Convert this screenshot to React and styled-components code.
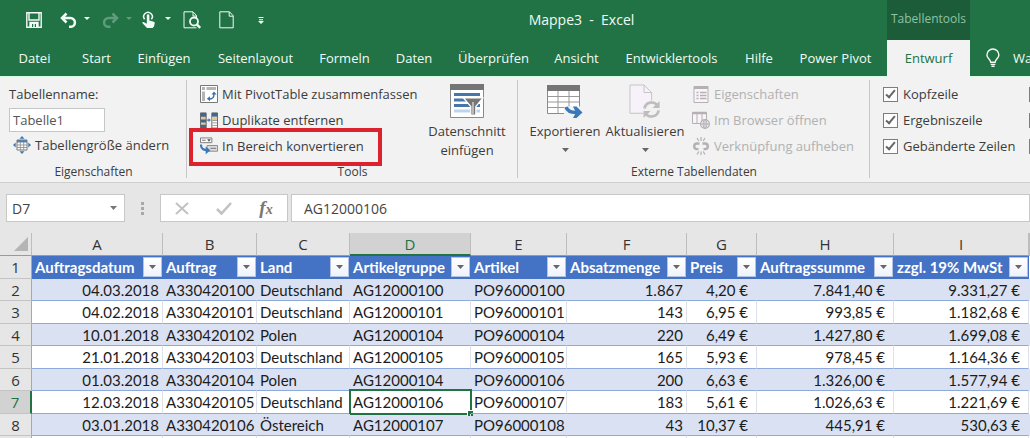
import React from "react";
import styled, { createGlobalStyle, css } from "styled-components";

const UI_FONT = `"Open Sans", "Noto Sans", sans-serif`;
const CELL_FONT = `Lato, "Open Sans", sans-serif`;

const GlobalStyle = createGlobalStyle`
  *, *::before, *::after { box-sizing: border-box; }
  body { margin: 0; background: #fff; font-family: ${UI_FONT}; color: #3c3c3c; }
  button, input { font: inherit; color: inherit; margin: 0; }
  button { border: 0; padding: 0; background: none; }
  svg { display: block; flex: none; }
`;

const Page = styled.div`
  display: flex;
  flex-direction: column;
  height: 100vh;
  overflow: hidden;
`;

/* ---------- Title bar and tabs ---------- */

const TitleBar = styled.header`
  display: flex;
  height: 40px;
  flex: none;
  background: #217346;
  color: #f2fbf5;
`;

const TitleMain = styled.div`
  display: flex;
  align-items: center;
  flex: 0 0 887px;
`;

const QuickAccess = styled.div`
  display: flex;
  align-items: center;
  width: 276px;
  padding-left: 26px;
`;

const QuickButton = styled.button`
  width: ${(p) => p.$w}px;
  height: 24px;
  opacity: ${(p) => (p.disabled ? 0.3 : 1)};
  color: #f2fbf5;
`;

const DocTitle = styled.h1`
  flex: 1;
  margin: 0;
  padding-bottom: 2px;
  text-align: center;
  font-size: 14px;
  font-weight: 400;
  white-space: pre;
`;

const ContextTitle = styled.div`
  flex: 0 0 83px;
  display: flex;
  align-items: center;
  justify-content: center;
  padding-bottom: 4px;
  background: #1c5c38;
  color: #8fc3a4;
  font-size: 12px;
`;

const TabBar = styled.nav`
  display: flex;
  flex: none;
  height: 37px;
  background: #217346;
  box-shadow: inset 0 -1px #d5f9e3;
`;

const Tab = styled.button`
  flex: 0 0 ${(p) => p.$w}px;
  margin-left: ${(p) => (p.$active ? 3 : 0)}px;
  padding-bottom: 2px;
  white-space: nowrap;
  font-size: 13px;
  color: ${(p) => (p.$active ? "#217346" : "#f2fbf5")};
  background: ${(p) => (p.$active ? "#f2f2f2" : "transparent")};
`;

const TellMe = styled.button`
  display: flex;
  align-items: center;
  gap: 13px;
  margin-left: 16px;
  padding-bottom: 2px;
  font-size: 13px;
  color: #f2fbf5;
  white-space: nowrap;
`;

/* ---------- Ribbon ---------- */

const Ribbon = styled.div`
  display: flex;
  flex: none;
  height: 106px;
  background: #f2f2f2;
  border-bottom: 1px solid #cfcfcf;
`;

const Group = styled.section`
  display: flex;
  flex-direction: column;
  flex: ${(p) => (p.$w ? `0 0 ${p.$w}px` : "1 0 auto")};
  position: relative;
  padding-top: 4px;

  &:not(:last-child)::after {
    content: "";
    position: absolute;
    right: 0;
    top: 3px;
    bottom: 4px;
    width: 1px;
    background: #c6c6c6;
  }
`;

const GroupBody = styled.div`
  display: flex;
  height: 82px;
  padding-left: ${(p) => p.$pad}px;
`;

const GroupLabel = styled.h2`
  margin: 0;
  text-align: center;
  font-size: 12px;
  line-height: 20px;
  font-weight: 400;
`;

const Stack = styled.div`
  display: flex;
  flex-direction: column;
  width: ${(p) => (p.$w ? `${p.$w}px` : "auto")};
  padding-left: ${(p) => p.$indent || 0}px;
`;

const NameLabel = styled.label`
  font-size: 13px;
  line-height: 27px;
`;

const NameInput = styled.input`
  width: 96px;
  height: 24px;
  padding: 0 3px;
  border: 1px solid #c6c6c6;
  background: #fff;
  font-size: 13px;
  color: #555;
`;

const Command = styled.button`
  position: relative;
  display: flex;
  align-items: center;
  gap: 4px;
  height: 26px;
  padding-left: ${(p) => p.$indent || 0}px;
  font-size: 13px;
  white-space: nowrap;
  color: ${(p) => (p.disabled ? "#b1b1b1" : "#3c3c3c")};

  svg { width: 18px; }

  ${(p) =>
    p.$marked &&
    css`
      &::after {
        content: "";
        position: absolute;
        top: -5px;
        bottom: -7px;
        left: -11px;
        width: 193px;
        border: 4px solid #dc222c;
      }
    `}
`;

const BigCommand = styled.button`
  display: flex;
  flex-direction: column;
  align-items: center;
  width: ${(p) => p.$w}px;
  padding-top: 3px;
  font-size: 13px;
  line-height: 19px;
  white-space: nowrap;

  & > svg:first-child { margin-bottom: 4px; }
  & > svg:last-child { margin-top: 7px; }
`;

const Check = styled.label`
  display: flex;
  align-items: center;
  gap: 5px;
  height: 26px;
  font-size: 13px;
  white-space: nowrap;
`;

const CheckBox = styled.input.attrs({ type: "checkbox" })`
  appearance: none;
  position: relative;
  width: 15px;
  height: 15px;
  border: 1px solid #7d7d7d;
  background: #fdfdfd;

  &:checked::after {
    content: "";
    position: absolute;
    left: 4px;
    top: 0;
    width: 5px;
    height: 10px;
    border: solid #666;
    border-width: 0 2px 2px 0;
    transform: rotate(40deg);
  }
`;

/* ---------- Formula bar ---------- */

const FormulaBar = styled.div`
  display: flex;
  flex: none;
  height: 50px;
  padding: 11px 0 11px 6px;
  background: #e6e6e6;
`;

const BarBox = styled.div`
  display: flex;
  align-items: center;
  flex: ${(p) => (p.$w ? `0 0 ${p.$w}px` : "1 1 0")};
  min-width: 0;
  margin-right: ${(p) => p.$after || 0}px;
  border: 1px solid #c8c8c8;
  background: #fff;
`;

const BarInput = styled.input`
  flex: 1;
  min-width: 0;
  border: 0;
  padding: 0 0 0 ${(p) => p.$pad}px;
  background: none;
  font-size: 14px;
  color: #444;
`;

const BarButton = styled.button`
  display: grid;
  place-items: center;
  width: ${(p) => p.$w}px;
  height: 26px;
`;

const Fx = styled.span`
  font: italic bold 19px "Liberation Serif", serif;
  color: #777;
  small { font-size: 14px; }
`;

const Dots = styled.div`
  display: grid;
  place-items: center;
  flex: 0 0 35px;
`;

/* ---------- Sheet ---------- */

const Sheet = styled.main`
  flex: 1;
  min-height: 0;
  overflow: hidden;
  background: #fff;
`;

const Grid = styled.table`
  table-layout: fixed;
  width: 100%;
  border-spacing: 0;
  font-family: ${CELL_FONT};
  font-size: 15px;
  line-height: 20px;
  font-variant-numeric: tabular-nums;
  color: #1c1c1c;
`;

const ColHead = styled.th`
  height: 23px;
  padding: 0;
  font-family: ${UI_FONT};
  font-size: 15px;
  font-weight: 400;
  color: ${(p) => (p.$active ? "#217346" : "#333")};
  background: ${(p) => (p.$active ? "#d2d2d2" : "#e6e6e6")};
  border-right: 1px solid #bdbdbd;
  border-bottom: ${(p) => (p.$active ? "2px solid #217346" : "1px solid #8f9bb0")};
`;

const Corner = styled(ColHead)`
  svg { margin: 0 3px 0 auto; }
`;

const Row = styled.tr`
  height: ${(p) => (p.$tall ? 23 : 22)}px;
  background: ${(p) => (p.$band ? "#d9e1f2" : "#fff")};
  --line: ${(p) => (p.$band ? "#d9e1f2" : "#dde1ea")};
`;

const RowHead = styled.th`
  padding: 0;
  font-family: ${UI_FONT};
  font-size: 15px;
  font-weight: 400;
  color: ${(p) => (p.$active ? "#217346" : "#333")};
  background: ${(p) => (p.$active ? "#d2d2d2" : "#e6e6e6")};
  border-right: ${(p) => (p.$active ? "2px solid #217346" : "1px solid #a8a8a8")};
  border-bottom: 1px solid #c4c4c4;
`;

const FieldHead = styled.th`
  padding: 0 1px 0 3px;
  background: #4472c4;
  border-bottom: 1px solid #4472c4;
  color: #fff;
  text-align: left;
  font-weight: 700;
  white-space: nowrap;
`;

const FieldInner = styled.div`
  display: flex;
  align-items: center;
  justify-content: space-between;
  height: 21px;
`;

const FieldName = styled.span`
  width: 0;
`;

const FilterButton = styled.button`
  display: grid;
  place-items: center;
  flex: none;
  width: 19px;
  height: 20px;
  border: 1px solid #b4c3e0;
  background: linear-gradient(#fff, #eef2fa);
`;

const Cell = styled.td`
  position: relative;
  padding: 0 ${(p) => p.$padRight}px 0 3px;
  text-align: ${(p) => (p.$right ? "right" : "left")};
  white-space: nowrap;
  border-right: 1px solid var(--line);
  border-bottom: 1px solid #8ea9db;
`;

const Selection = styled.span`
  position: absolute;
  inset: -2px -2px -2px -1px;
  border: 2px solid #217346;

  &::after {
    content: "";
    position: absolute;
    right: -3px;
    bottom: -3px;
    width: 6px;
    height: 6px;
    background: #217346;
    border: solid #fff;
    border-width: 1px 0 0 1px;
  }
`;

/* ---------- Icons ---------- */

const Arrow = ({ color = "#666", w = 7 }) => (
  <svg width={w} height="4" viewBox="0 0 7 4"><path d="M0 0h7L3.5 4z" fill={color} /></svg>
);

const SaveIcon = () => (
  <svg width="16" height="16" viewBox="0 0 16 16" fill="none" stroke="currentColor" strokeWidth="1.4">
    <path d="M.8.8h14.4v14.4H.8z" /><path d="M3 1v7h10V1" />
    <path d="M4 10.500h8v5H4z" fill="currentColor" /><path d="M6.600 12v3M9.400 12v3" stroke="#217346" strokeWidth="1.2" />
  </svg>
);
const UndoIcon = () => (
  <svg width="30" height="16" viewBox="0 0 30 16">
    <path d="M2 6h8.500a4.400 4.400 0 0 1 0 8.800H9" fill="none" stroke="currentColor" strokeWidth="2.500" />
    <path d="M6.500 1.500 2 6l4.500 4.500" fill="none" stroke="currentColor" strokeWidth="2.500" />
    <path d="M24 5h6l-3 3z" fill="currentColor" />
  </svg>
);
const RedoIcon = () => (
  <svg width="30" height="16" viewBox="0 0 30 16">
    <path d="M15 6H6.500a4.400 4.400 0 0 0 0 8.800h2" fill="none" stroke="currentColor" strokeWidth="2.500" />
    <path d="M10.500 1.500 15 6l-4.500 4.500" fill="none" stroke="currentColor" strokeWidth="2.500" />
    <path d="M24 5h6l-3 3z" fill="currentColor" />
  </svg>
);
const TouchIcon = () => (
  <svg width="29" height="18" viewBox="0 0 29 18">
    <path d="M2.600 8.300A4.300 4.300 0 1 1 9.400 8.300" fill="none" stroke="currentColor" strokeWidth="1.500" />
    <path d="M4.800 4.500a1.300 1.300 0 0 1 2.600 0v5l4.400 1.200c.8.300 1 .8.900 1.500L12 15.500 10.500 17H5L.5 12.200c-.4-1 .6-1.600 1.500-1l2.800 1.600z" fill="currentColor" />
    <path d="M23 6h6l-3 3z" fill="currentColor" />
  </svg>
);
const PreviewIcon = () => (
  <svg width="19" height="18" viewBox="0 0 19 18" fill="none" stroke="currentColor">
    <path d="M13.500 7V4.500L10 .8H1v16h12.500" /><path d="M10 1v4h3.500" />
    <circle cx="11" cy="10.500" r="4" strokeWidth="1.800" /><path d="m13.800 13.300 3.400 3.500" strokeWidth="2.400" />
  </svg>
);
const NewIcon = () => (
  <svg width="15" height="18" viewBox="0 0 15 18" fill="none" stroke="currentColor">
    <path d="M.8.8h9.700l3.700 4v12H.8z" /><path d="M10.200 1v4.200h4" />
  </svg>
);
const CustomizeIcon = () => (
  <svg width="6" height="8" viewBox="0 0 6 8" fill="currentColor"><path d="M.5 1h5v1h-5zM1 3.200h4v1H1zM0 5h6L3 8z" /></svg>
);
const BulbIcon = () => (
  <svg width="14" height="20" viewBox="0 0 15 20" fill="none" stroke="currentColor" strokeWidth="1.500">
    <path d="M5 14.500c0-3-4-4-4-7.800a6.400 6.400 0 0 1 12.800 0c0 3.800-4 4.800-4 7.800z" /><path d="M5 16.800h5M5.800 18.900h3.400" />
  </svg>
);
const ResizeIcon = () => (
  <svg width="18" height="18" viewBox="0 0 18 18">
    <path d="M4 4h10v10H4z" fill="#fff" stroke="#777" /><path d="M4 4h10v2.500H4z" fill="#5a7fa8" />
    <path d="M4 9h10M4 11.500h10M7.300 6v8M10.700 6v8" stroke="#999" fill="none" />
    <path d="m9 0 2.500 2.700h-5zM9 18l2.500-2.700h-5zM0 9l2.700-2.500v5zM18 9l-2.700-2.500v5z" fill="#3f76b0" />
  </svg>
);
const PivotIcon = () => (
  <svg width="18" height="18" viewBox="0 0 18 18">
    <path d="M.5.5h17v17H.5z" fill="#fff" stroke="#777" />
    <path d="M2 2h3v3H2zM6.500 2H16v3H6.500zM2 6.500h3V16H2z" fill="#b4b4b4" />
    <path d="M9 14c4 0 5-1.500 5-5" fill="none" stroke="#3a72b0" strokeWidth="1.500" />
    <path d="m11.500 9.500 2.500-3 2.600 3zM10 11.300v5l-3.200-2.500z" fill="#3a72b0" />
  </svg>
);
const DuplicateIcon = () => (
  <svg width="19" height="17" viewBox="0 0 19 17">
    <path d="M.5.5h6v16h-6z" fill="#41658c" stroke="#5c6670" /><path d="M1 4.500h5v3H1zM1 10.500h5V13H1z" fill="#e6c68c" />
    <path d="M12.500.5h6v16h-6z" fill="#fff" stroke="#666" /><path d="M12.500.5h6v4h-6z" fill="#41658c" />
    <path d="M13 5h5v3h-5z" fill="#e6c68c" /><path d="M13 8.500h5M13 11h5M13 13.700h5" stroke="#999" />
    <path d="M7.500 8h2" stroke="#3a72b0" strokeWidth="1.300" /><path d="M9 6 11.500 8 9 10z" fill="#3a72b0" />
  </svg>
);
const ConvertIcon = () => (
  <svg width="19" height="18" viewBox="0 0 19 18">
    <path d="M.5.500h12v5H.5z" fill="#fff" stroke="#777" /><path d="M2 3h4" stroke="#999" strokeWidth="1.500" />
    <path d="M7.500 2h4l-2 2.500z" fill="#555" /><path d="M7.500 8.500h11v6h-11z" fill="#ddd" stroke="#888" />
    <path d="M11 11.500h6" stroke="#888" strokeWidth="1.300" />
    <path d="M1 7.500c0 4 2.500 6 7 6" fill="none" stroke="#3a78b8" strokeWidth="2.200" /><path d="m6 9.500 5 4-5 4.300" fill="#3a78b8" />
  </svg>
);
const SlicerIcon = () => (
  <svg width="34" height="34" viewBox="0 0 34 34">
    <path d="M.5.5h33v33H.5z" fill="#fff" stroke="#8a8a8a" /><path d="M0 0h34v6H0z" fill="#757575" />
    <path d="M4 9h26v3H4zM4 14.500h26v3H4zM4 20h26v3H4z" fill="#4777a8" /><path d="M4 25.500h26v3H4z" fill="#bcd5ec" />
    <path d="M13.500 14H33l-7.200 8.500V31h-5v-8.500z" fill="#757575" stroke="#fff" strokeWidth="1.200" />
    <path d="M23 18v12" stroke="#d0d0d0" strokeWidth="1.500" />
  </svg>
);
const ExportIcon = () => (
  <svg width="36" height="34" viewBox="0 0 36 34">
    <path d="M.5 1.500h32v28H.5z" fill="#fff" stroke="#8a8a8a" /><path d="M0 1h33v6H0z" fill="#757575" />
    <path d="M1 12.500h31M1 18h31M1 23.500h31M11 7v22M22 7v22" stroke="#999" fill="none" />
    <path d="M17 22.500h18V30H17z" fill="#f2f2f2" />
    <path d="M19 23c1.500 4.500 5 5.500 10 5.500" fill="none" stroke="#3a78b8" strokeWidth="3.600" /><path d="M26 22.500h3.500l6 6-6 5.500H26l3-5.500z" fill="#3a78b8" />
  </svg>
);
const RefreshIcon = () => (
  <svg width="32" height="34" viewBox="0 0 34 36" fill="none" stroke="#c3c0c5">
    <path d="M1 1h15l8 8v22H1z" fill="#f7f2f9" /><path d="M16 1v8h8" />
    <circle cx="24" cy="27" r="9.500" fill="#f2f2f2" stroke="none" />
    <g stroke="#bdbdbd" strokeWidth="2.800"><path d="M16.500 26a7.500 7.500 0 0 1 14-2.500M31.500 28a7.500 7.500 0 0 1-14 2.500" /></g>
    <path d="M32.500 18v7.500H25zM15.500 36v-7.500H23z" fill="#bdbdbd" stroke="none" />
  </svg>
);
const PropertiesIcon = () => (
  <svg width="17" height="17" viewBox="0 0 17 17" fill="none" stroke="#b4b0b4">
    <path d="M1.500.5h14v16h-14z" fill="#f8f4f8" /><path d="M1.500 1.500h14" strokeWidth="3" />
    <path d="M4 6.500h2M4 9.500h2M4 12.500h2M7.500 6.500H14M7.500 9.500H14M7.500 12.500H14" strokeWidth="1.300" />
  </svg>
);
const BrowserIcon = () => (
  <svg width="18" height="18" viewBox="0 0 18 18" fill="none" stroke="#b4b0b4">
    <path d="M.5 1.500h14v11H.5z" fill="#f8f4f8" /><path d="M.5 2h14" strokeWidth="2.500" /><path d="M5 3v9M10 3v9" />
    <circle cx="13" cy="13" r="4.400" fill="#f2f2f2" strokeWidth="1.200" /><path d="M13 8.500v9M8.500 13h9" />
    <ellipse cx="13" cy="13" rx="2" ry="4.400" />
  </svg>
);
const UnlinkIcon = () => (
  <svg width="17" height="18" viewBox="0 0 17 18" fill="none" stroke="#b4b0b4">
    <path d="M7 6.500H4.500a2.800 2.800 0 0 0 0 5.600H6M10 6.500h2.500a2.800 2.800 0 0 1 0 5.600H11" strokeWidth="2.400" />
    <path d="M8.500 0v4M4.500 1l1.800 3M12.500 1l-1.800 3M8.500 14.500v3.500M4.500 17.500l1.800-3M12.500 17.500l-1.800-3" strokeWidth="1.200" />
  </svg>
);

/* ---------- Data ---------- */

const TABS = [
  ["Datei", 69], ["Start", 55], ["Einfügen", 80], ["Seitenlayout", 103], ["Formeln", 75], ["Daten", 64],
  ["Überprüfen", 95], ["Ansicht", 71], ["Entwicklertools", 119], ["Hilfe", 56], ["Power Pivot", 97], ["Entwurf", 83],
];

const COLUMNS = [
  { id: "A", name: "Auftragsdatum", w: 131, right: true, pad: 3 },
  { id: "B", name: "Auftrag", w: 94 },
  { id: "C", name: "Land", w: 93 },
  { id: "D", name: "Artikelgruppe", w: 121 },
  { id: "E", name: "Artikel", w: 96 },
  { id: "F", name: "Absatzmenge", w: 120, right: true, pad: 3 },
  { id: "G", name: "Preis", w: 70, right: true, pad: 8 },
  { id: "H", name: "Auftragssumme", w: 137, right: true, pad: 8 },
  { id: "I", name: "zzgl. 19% MwSt", w: 135, right: true, pad: 8 },
];

const ROWS = [
  ["04.03.2018", "A330420100", "Deutschland", "AG12000100", "PO96000100", "1.867", "4,20 €", "7.841,40 €", "9.331,27 €"],
  ["04.02.2018", "A330420101", "Deutschland", "AG12000101", "PO96000101", "143", "6,95 €", "993,85 €", "1.182,68 €"],
  ["10.01.2018", "A330420102", "Polen", "AG12000104", "PO96000104", "220", "6,49 €", "1.427,80 €", "1.699,08 €"],
  ["21.01.2018", "A330420103", "Deutschland", "AG12000105", "PO96000105", "165", "5,93 €", "978,45 €", "1.164,36 €"],
  ["01.03.2018", "A330420104", "Polen", "AG12000104", "PO96000106", "200", "6,63 €", "1.326,00 €", "1.577,94 €"],
  ["12.03.2018", "A330420105", "Deutschland", "AG12000106", "PO96000107", "183", "5,61 €", "1.026,63 €", "1.221,69 €"],
  ["03.01.2018", "A330420106", "Östereich", "AG12000107", "PO96000108", "43", "10,37 €", "445,91 €", "530,63 €"],
];

const SELECTED = { row: 7, col: "D" };

export default function App() {
  return (
    <Page>
      <GlobalStyle />
      <TitleBar>
        <TitleMain>
          <QuickAccess>
            <QuickButton $w={34} aria-label="Speichern"><SaveIcon /></QuickButton>
            <QuickButton $w={42} aria-label="Rückgängig"><UndoIcon /></QuickButton>
            <QuickButton $w={40} aria-label="Wiederholen" disabled><RedoIcon /></QuickButton>
            <QuickButton $w={41} aria-label="Touchmodus"><TouchIcon /></QuickButton>
            <QuickButton $w={36} aria-label="Seitenansicht"><PreviewIcon /></QuickButton>
            <QuickButton $w={39} aria-label="Neu"><NewIcon /></QuickButton>
            <QuickButton $w={6} aria-label="Anpassen"><CustomizeIcon /></QuickButton>
          </QuickAccess>
          <DocTitle>{"Mappe3  -  Excel"}</DocTitle>
        </TitleMain>
        <ContextTitle>Tabellentools</ContextTitle>
      </TitleBar>

      <TabBar>
        {TABS.map(([name, w]) => (
          <Tab key={name} $w={w} $active={name === "Entwurf"}>{name}</Tab>
        ))}
        <TellMe><BulbIcon />Wa</TellMe>
      </TabBar>

      <Ribbon>
        <Group $w={187}>
          <GroupBody $pad={9}>
            <Stack>
              <NameLabel htmlFor="table-name">Tabellenname:</NameLabel>
              <NameInput id="table-name" defaultValue="Tabelle1" />
              <Command $indent={4}><ResizeIcon />Tabellengröße ändern</Command>
            </Stack>
          </GroupBody>
          <GroupLabel>Eigenschaften</GroupLabel>
        </Group>

        <Group $w={331}>
          <GroupBody $pad={13}>
            <Stack $w={222}>
              <Command><PivotIcon />Mit PivotTable zusammenfassen</Command>
              <Command><DuplicateIcon />Duplikate entfernen</Command>
              <Command $marked><ConvertIcon />In Bereich konvertieren</Command>
            </Stack>
            <BigCommand $w={90}><SlicerIcon /><span>Datenschnitt<br />einfügen</span></BigCommand>
          </GroupBody>
          <GroupLabel>Tools</GroupLabel>
        </Group>

        <Group $w={352}>
          <GroupBody $pad={8}>
            <BigCommand $w={78}><ExportIcon />Exportieren<Arrow /></BigCommand>
            <BigCommand $w={82}><RefreshIcon />Aktualisieren<Arrow /></BigCommand>
            <Stack $w={170} $indent={6}>
              <Command disabled><PropertiesIcon />Eigenschaften</Command>
              <Command disabled><BrowserIcon />Im Browser öffnen</Command>
              <Command disabled><UnlinkIcon />Verknüpfung aufheben</Command>
            </Stack>
          </GroupBody>
          <GroupLabel>Externe Tabellendaten</GroupLabel>
        </Group>

        <Group>
          <GroupBody $pad={13}>
            <Stack $w={146}>
              <Check><CheckBox defaultChecked />Kopfzeile</Check>
              <Check><CheckBox defaultChecked />Ergebniszeile</Check>
              <Check><CheckBox defaultChecked />Gebänderte Zeilen</Check>
            </Stack>
            <Stack>
              <Check><CheckBox aria-label="Erste Spalte" /></Check>
              <Check><CheckBox aria-label="Letzte Spalte" /></Check>
              <Check><CheckBox aria-label="Gebänderte Spalten" /></Check>
            </Stack>
          </GroupBody>
        </Group>
      </Ribbon>

      <FormulaBar>
        <BarBox $w={119}>
          <BarInput $pad={5} defaultValue="D7" aria-label="Namenfeld" />
          <BarButton $w={22} aria-label="Namen anzeigen"><Arrow color="#777" /></BarButton>
        </BarBox>
        <Dots>
          <svg width="3" height="13" viewBox="0 0 3 13" fill="#a8a8a8"><path d="M0 0h3v3H0zM0 5h3v3H0zM0 10h3v3H0z" /></svg>
        </Dots>
        <BarBox $w={128} $after={3}>
          <BarButton $w={41} aria-label="Abbrechen">
            <svg width="14" height="13" viewBox="0 0 14 13"><path d="m1 1 12 11M13 1 1 12" stroke="#c2c2c2" strokeWidth="2" /></svg>
          </BarButton>
          <BarButton $w={43} aria-label="Eingeben">
            <svg width="16" height="13" viewBox="0 0 16 13"><path d="m1 7 4.500 4.500L15 1" stroke="#c2c2c2" strokeWidth="2.600" fill="none" /></svg>
          </BarButton>
          <BarButton $w={42} aria-label="Funktion einfügen"><Fx>f<small>x</small></Fx></BarButton>
        </BarBox>
        <BarBox>
          <BarInput $pad={12} defaultValue="AG12000106" aria-label="Bearbeitungsleiste" />
        </BarBox>
      </FormulaBar>

      <Sheet>
        <Grid>
          <colgroup>
            <col style={{ width: 32 }} />
            {COLUMNS.map((c) => <col key={c.id} style={{ width: c.w }} />)}
            <col />
          </colgroup>
          <thead>
            <tr>
              <Corner><svg width="14" height="14" viewBox="0 0 14 14"><path d="M14 0v14H0z" fill="#b4b4b4" /></svg></Corner>
              {COLUMNS.map((c) => <ColHead key={c.id} $active={c.id === SELECTED.col}>{c.id}</ColHead>)}
              <ColHead />
            </tr>
          </thead>
          <tbody>
            <Row $tall>
              <RowHead>1</RowHead>
              {COLUMNS.map((c) => (
                <FieldHead key={c.id}>
                  <FieldInner>
                    <FieldName>{c.name}</FieldName>
                    <FilterButton aria-label={`${c.name} filtern`}><Arrow /></FilterButton>
                  </FieldInner>
                </FieldHead>
              ))}
              <td />
            </Row>
            {ROWS.map((row, i) => {
              const n = i + 2;
              return (
                <Row key={n} $tall={n % 2 === 1} $band={n % 2 === 0}>
                  <RowHead $active={n === SELECTED.row}>{n}</RowHead>
                  {row.map((value, j) => {
                    const c = COLUMNS[j];
                    return (
                      <Cell key={c.id} $right={c.right} $padRight={c.pad || 0}>
                        {value}
                        {n === SELECTED.row && c.id === SELECTED.col && <Selection />}
                      </Cell>
                    );
                  })}
                  <td />
                </Row>
              );
            })}
            <Row $tall>
              <RowHead />
              {COLUMNS.map((c) => <Cell key={c.id} $padRight={0} />)}
              <td />
            </Row>
          </tbody>
        </Grid>
      </Sheet>
    </Page>
  );
}
